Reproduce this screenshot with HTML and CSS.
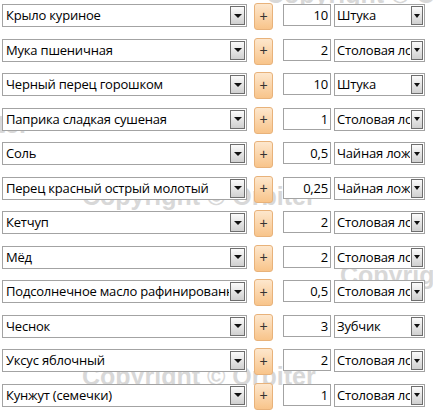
FILE: index.html
```html
<!DOCTYPE html>
<html lang="ru">
<head>
<meta charset="utf-8">
<link rel="stylesheet" href="styles.css">
</head>
<body>
<div class="page">
  <div class="watermarks" aria-hidden="true">
    <span class="wm wm-a">Copyright © Orbiter</span>
    <span class="wm wm-b">Copyright © Orbiter</span>
    <span class="wm wm-c">Copyright © Orbiter</span>
    <span class="wm wm-d">Copyright © Orbiter</span>
    <span class="wm wm-e">Copyright © Orbiter</span>
  </div>
  <div class="list">
    <div class="row"><div class="combo name"><span class="val">Крыло куриное</span><span class="arrow"></span></div><button class="plus">+</button><div class="qty">10</div><div class="combo unit"><span class="val">Штука</span><span class="arrow small"></span></div></div>
    <div class="row"><div class="combo name"><span class="val">Мука пшеничная</span><span class="arrow"></span></div><button class="plus">+</button><div class="qty">2</div><div class="combo unit"><span class="val">Столовая ложка</span><span class="arrow small"></span></div></div>
    <div class="row"><div class="combo name"><span class="val">Черный перец горошком</span><span class="arrow"></span></div><button class="plus">+</button><div class="qty">10</div><div class="combo unit"><span class="val">Штука</span><span class="arrow small"></span></div></div>
    <div class="row"><div class="combo name"><span class="val">Паприка сладкая сушеная</span><span class="arrow"></span></div><button class="plus">+</button><div class="qty">1</div><div class="combo unit"><span class="val">Столовая ложка</span><span class="arrow small"></span></div></div>
    <div class="row"><div class="combo name"><span class="val">Соль</span><span class="arrow"></span></div><button class="plus">+</button><div class="qty">0,5</div><div class="combo unit"><span class="val">Чайная ложка</span><span class="arrow small"></span></div></div>
    <div class="row"><div class="combo name"><span class="val">Перец красный острый молотый</span><span class="arrow"></span></div><button class="plus">+</button><div class="qty">0,25</div><div class="combo unit"><span class="val">Чайная ложка</span><span class="arrow small"></span></div></div>
    <div class="row"><div class="combo name"><span class="val">Кетчуп</span><span class="arrow"></span></div><button class="plus">+</button><div class="qty">2</div><div class="combo unit"><span class="val">Столовая ложка</span><span class="arrow small"></span></div></div>
    <div class="row"><div class="combo name"><span class="val">Мёд</span><span class="arrow"></span></div><button class="plus">+</button><div class="qty">2</div><div class="combo unit"><span class="val">Столовая ложка</span><span class="arrow small"></span></div></div>
    <div class="row"><div class="combo name"><span class="val">Подсолнечное масло рафинированное</span><span class="arrow"></span></div><button class="plus">+</button><div class="qty">0,5</div><div class="combo unit"><span class="val">Столовая ложка</span><span class="arrow small"></span></div></div>
    <div class="row"><div class="combo name"><span class="val">Чеснок</span><span class="arrow"></span></div><button class="plus">+</button><div class="qty">3</div><div class="combo unit"><span class="val">Зубчик</span><span class="arrow small"></span></div></div>
    <div class="row"><div class="combo name"><span class="val">Уксус яблочный</span><span class="arrow"></span></div><button class="plus">+</button><div class="qty">2</div><div class="combo unit"><span class="val">Столовая ложка</span><span class="arrow small"></span></div></div>
    <div class="row"><div class="combo name"><span class="val">Кунжут (семечки)</span><span class="arrow"></span></div><button class="plus">+</button><div class="qty">1</div><div class="combo unit"><span class="val">Столовая ложка</span><span class="arrow small"></span></div></div>
  </div>
</div>
</body>
</html>
```
FILE: styles.css
```css
html, body {
  margin: 0;
  padding: 0;
  background: #ffffff;
}
body {
  width: 433px;
  height: 411px;
  overflow: hidden;
  font-family: "Open Sans", "Noto Sans", sans-serif;
  font-size: 13px;
  letter-spacing: -0.2px;
  color: #000;
}
.page {
  position: relative;
  width: 433px;
  height: 411px;
  overflow: hidden;
}
.watermarks {
  position: absolute;
  inset: 0;
  z-index: 0;
}
.wm {
  position: absolute;
  white-space: nowrap;
  font-family: "Liberation Sans", Arial, sans-serif;
  font-weight: bold;
  font-size: 25px;
  letter-spacing: 0;
  color: #d8d8d8;
  line-height: 1;
}
.wm-a { left: 266px; top: -18px; }
.wm-b { left: -205px; top: 112px; }
.wm-c { left: 82px; top: 184px; }
.wm-d { left: 340px; top: 263px; }
.wm-e { left: 82px; top: 364px; }

.list {
  position: relative;
  z-index: 1;
  display: flex;
  flex-direction: column;
  gap: 11.5px;
  padding: 4px 0 0 2px;
}
.row {
  display: flex;
  align-items: flex-start;
  height: 23px;
}
.combo {
  display: flex;
  align-items: stretch;
  height: 23px;
  box-sizing: border-box;
  border: 1px solid #a3a3a3;
  background: #fff;
}
.val {
  flex: 1;
  min-width: 0;
  overflow: hidden;
  white-space: nowrap;
  line-height: 21px;
  padding-left: 3px;
}
.name { width: 245px; }
.unit { width: 91px; margin-left: 3px; }
.unit .val { padding-left: 2px; }
.arrow {
  position: relative;
  flex: none;
  width: 15px;
  margin: 1px;
  box-sizing: border-box;
  border: 1px solid #6e6e6e;
  background: linear-gradient(#fbfbfb, #d0d0d0);
}
.arrow::after {
  content: "";
  position: absolute;
  left: 50%;
  top: 50%;
  margin-left: -4px;
  margin-top: -2px;
  border-left: 4px solid transparent;
  border-right: 4px solid transparent;
  border-top: 4px solid #111;
}
.arrow.small { width: 12px; }
.arrow.small::after {
  margin-left: -3.5px;
  border-left-width: 3.5px;
  border-right-width: 3.5px;
}
.plus {
  flex: none;
  width: 19px;
  height: 27px;
  margin: -1px 10px 0 7px;
  padding: 0 0 2px;
  box-sizing: border-box;
  border: 1px solid #e8b27a;
  border-radius: 3px;
  background: linear-gradient(#fde7cd, #f8c48a);
  font-family: "Liberation Sans", Arial, sans-serif;
  font-size: 14px;
  letter-spacing: 0;
  color: #333;
  line-height: 1;
}
.qty {
  flex: none;
  width: 48px;
  height: 22px;
  box-sizing: border-box;
  border: 1px solid #a3a3a3;
  background: #fff;
  text-align: right;
  line-height: 20px;
  padding-right: 2px;
}
```
